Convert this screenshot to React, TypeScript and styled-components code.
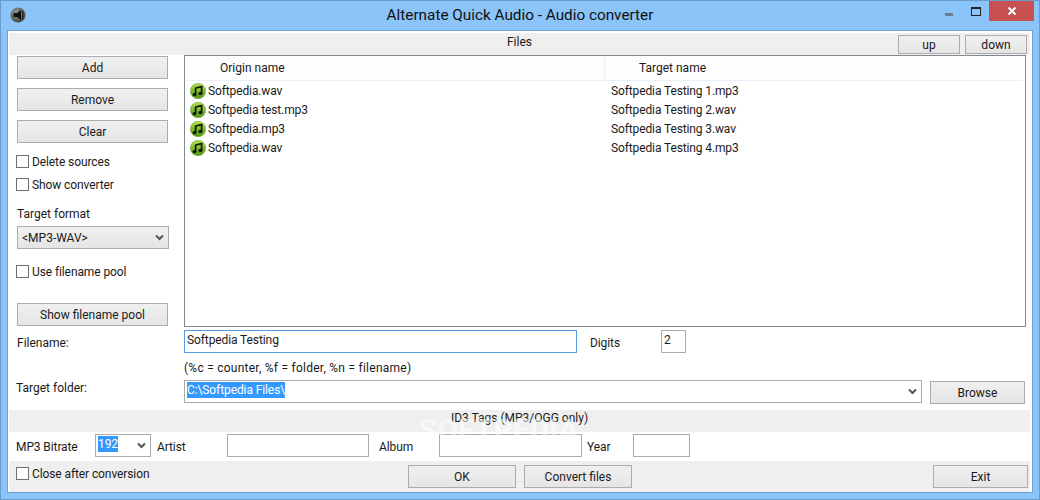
import React from "react";
import styled, { createGlobalStyle } from "styled-components";

const Global = createGlobalStyle`
  html, body { margin: 0; padding: 0; width: 1040px; height: 500px; overflow: hidden; }
  * { box-sizing: border-box; }
  body { font-family: Roboto, "Open Sans", sans-serif; font-size: 12px; color: #1a1a1a; }
`;

const Window = styled.div`
  width: 1040px; height: 500px; background: #8ac4f8; border: 1px solid #6a9ccb;
  display: flex; flex-direction: column;
`;
const TitleBar = styled.div`
  height: 29px; flex: none; display: grid; grid-template-columns: 1fr auto 1fr; align-items: start;
`;
const TitleIcon = styled.svg`width: 16px; height: 16px; margin: 6px 0 0 9px; display: block;`;
const TitleText = styled.div`font-size: 15.3px; line-height: 29px; color: #111;`;
const Controls = styled.div`display: flex; justify-content: flex-end; align-items: flex-start; margin-right: 5px;`;
const Minimize = styled.div`width: 8px; height: 3px; background: #6a7f94; margin: 12px 18px 0 0;`;
const Maximize = styled.div`width: 10px; height: 9px; border: 1px solid #222; border-top-width: 2px; margin: 6px 8px 0 0;`;
const CloseBtn = styled.div`
  width: 45px; height: 20px; background: #c75050; color: #fff; display: flex; align-items: center; justify-content: center;
`;

const Panel = styled.div`
  position: relative; width: 1026px; height: 463px; margin-left: 6px; flex: none;
  border: 1px solid #6da2d3; background: #fff; padding: 2px 2px 0 1px; display: flex; flex-direction: column;
`;
const Band = styled.div`
  height: 22px; background: #efefef; flex: none; display: grid; grid-template-columns: 1fr auto 1fr; align-items: center;
`;
const BandCaption = styled.div`line-height: 18px; margin-top: -4px;`;
const BandActions = styled.div`display: flex; justify-content: flex-end; gap: 5px; padding-right: 3px; margin-top: 1px;`;

const Btn = styled.button<{ $w?: number; $h?: number }>`
  width: ${p => (p.$w ? `${p.$w}px` : "100%")}; height: ${p => p.$h ?? 23}px; flex: none;
  background: linear-gradient(#f0f0f0, #e5e5e5); border: 1px solid #acacac; border-radius: 0;
  font: inherit; color: #1a1a1a; padding: 0; display: block;
`;

const Main = styled.div`display: flex; height: 272px; flex: none;`;
const Side = styled.div`width: 175px; flex: none; padding: 1px 6px 0 8px; display: flex; flex-direction: column;`;
const SideBtn = styled(Btn)<{ $mt?: number }>`margin-top: ${p => p.$mt ?? 0}px; width: 151px;`;
const CheckRow = styled.label<{ $mt?: number }>`
  display: flex; align-items: center; gap: 3px; height: 13px; margin-top: ${p => p.$mt ?? 0}px; margin-left: -1px;
  letter-spacing: -0.1px;
`;
const Check = styled.span`width: 13px; height: 13px; border: 1px solid #707070; background: #fff; flex: none;`;
const SideLabel = styled.div`line-height: 16px; margin-top: 15px;`;
const Combo = styled.div<{ $w?: number }>`
  height: 23px; width: ${p => (p.$w ? `${p.$w}px` : "100%")}; flex: none; margin-top: 4px;
  border: 1px solid #acacac; background: linear-gradient(#f0f0f0, #e5e5e5);
  display: flex; align-items: center; justify-content: space-between; padding: 0 3px 0 4px;
`;
const Chevron = styled.svg`width: 9px; height: 7px; flex: none; margin-right: 1px;`;

const List = styled.div`
  width: 842px; height: 272px; flex: none; border: 1px solid #828790; background: #fff; display: flex; flex-direction: column;
`;
const ListHead = styled.div`
  height: 25px; flex: none; display: grid; grid-template-columns: 419px 1fr; margin: 0 2px 0 1px;
  background: #fdfdfd; border-bottom: 1px solid #e8f0fb; align-items: center;
`;
const HeadCell = styled.div<{ $pl: number; $sep?: boolean }>`
  padding-left: ${p => p.$pl}px; height: 100%; line-height: 24px;
  border-right: ${p => (p.$sep ? "1px solid #e8f0fb" : "0")};
`;
const Row = styled.div`
  display: grid; grid-template-columns: 426px 1fr; height: 19px; align-items: center; letter-spacing: -0.12px;
`;
const NameCell = styled.div`display: flex; align-items: center; gap: 2px; padding-left: 5px;`;
const NoteIcon = styled.svg`width: 16px; height: 16px; flex: none; display: block;`;

const FormRow = styled.div<{ $h: number; $mt?: number }>`
  display: flex; height: ${p => p.$h}px; flex: none; align-items: flex-start; margin-top: ${p => p.$mt ?? 0}px;
`;
const LeadLabel = styled.div<{ $pl?: number; $mt?: number }>`
  width: 175px; flex: none; padding-left: ${p => p.$pl ?? 8}px; margin-top: ${p => p.$mt ?? 0}px; line-height: 16px;
`;
const Field = styled.div<{ $w: number; $focus?: boolean }>`
  width: ${p => p.$w}px; height: 23px; flex: none; letter-spacing: -0.1px;
  border: 1px solid ${p => (p.$focus ? "#569de5" : "#acacac")}; background: #fff;
  padding: 0 2px; line-height: 18px; display: flex; justify-content: space-between; align-items: flex-start;
`;
const Inline = styled.div<{ $ml: number; $mt?: number; $w?: number }>`
  margin-left: ${p => p.$ml}px; margin-top: ${p => p.$mt ?? 0}px; line-height: 16px; flex: none; letter-spacing: -0.1px;
  ${p => (p.$w ? `width: ${p.$w}px;` : "")}
`;
const Hint = styled.div`height: 25px; flex: none; padding: 5px 0 0 175px; line-height: 16px; letter-spacing: 0.25px;`;
const Selected = styled.span`background: #3399ff; color: #fff; line-height: 16px; margin-top: 1px;`;
const FieldChevron = styled(Chevron)`margin: 7px 2px 0 0;`;
const BrowseBtn = styled(Btn)`margin: 1px 0 0 8px;`;

const TagCaption = styled.div`
  height: 22px; flex: none; background: #efefef; text-align: center; line-height: 16px; color: #222;
`;
const TagRow = styled.div`height: 29px; flex: none; display: flex; align-items: flex-start; padding-top: 2px;`;
const Footer = styled.div`
  height: 31px; flex: none; background: #efefef; display: flex; align-items: flex-start; padding-top: 4px;
`;
const FooterCheck = styled(CheckRow)`margin: 2px 0 0 7px; width: 392px;`;
const FooterBtn = styled(Btn)<{ $ml?: number }>`margin-left: ${p => p.$ml ?? 0}px;`;
const Watermark = styled.div`
  position: absolute; left: 411px; top: 381px; font-size: 30px; font-weight: 700;
  color: #fff; opacity: 0.5; pointer-events: none; line-height: 36px;
`;

const Down = () => (
  <Chevron viewBox="0 0 9 7"><path d="M1 1.5 4.5 5 8 1.5" fill="none" stroke="#555" strokeWidth="2" /></Chevron>
);
const FieldDown = () => (
  <FieldChevron viewBox="0 0 9 7"><path d="M1 1.5 4.5 5 8 1.5" fill="none" stroke="#555" strokeWidth="2" /></FieldChevron>
);

const Note = ({ id }: { id: string }) => (
  <NoteIcon viewBox="0 0 16 16">
    <defs>
      <linearGradient id={id} x1="0" y1="0" x2="0" y2="1">
        <stop offset="0" stopColor="#b4e050" />
        <stop offset="1" stopColor="#4f9412" />
      </linearGradient>
    </defs>
    <circle cx="8" cy="8" r="7.7" fill={`url(#${id})`} stroke="#6b9a30" strokeWidth="0.5" />
    <path d="M5.6 5 11.6 3.6V10.4" fill="none" stroke="#0e1a08" strokeWidth="1.7" />
    <path d="M5.6 4.8V11.6" fill="none" stroke="#0e1a08" strokeWidth="1.7" />
    <ellipse cx="4.5" cy="11.6" rx="2" ry="1.7" fill="#0e1a08" />
    <ellipse cx="10.4" cy="10.5" rx="2" ry="1.7" fill="#0e1a08" />
  </NoteIcon>
);

const files = [
  ["Softpedia.wav", "Softpedia Testing 1.mp3"],
  ["Softpedia test.mp3", "Softpedia Testing 2.wav"],
  ["Softpedia.mp3", "Softpedia Testing 3.wav"],
  ["Softpedia.wav", "Softpedia Testing 4.mp3"],
];

export default function App() {
  return (
    <>
      <Global />
      <Window>
        <TitleBar>
          <TitleIcon viewBox="0 0 16 16">
            <defs>
              <radialGradient id="spk" cx="0.4" cy="0.35" r="0.75">
                <stop offset="0" stopColor="#9a9a9a" />
                <stop offset="1" stopColor="#3c3c3c" />
              </radialGradient>
            </defs>
            <circle cx="8" cy="8" r="7.6" fill="url(#spk)" />
            <path d="M3.5 6H7L11 3V13L7 10H3.5Z" fill="#111" />
            <rect x="12" y="4" width="1.4" height="8" fill="#222" />
          </TitleIcon>
          <TitleText>Alternate Quick Audio - Audio converter</TitleText>
          <Controls>
            <Minimize />
            <Maximize />
            <CloseBtn>
              <svg width="10" height="10" viewBox="0 0 10 10"><path d="M1.5 1.5 8.5 8.5M8.5 1.5 1.5 8.5" stroke="#fff" strokeWidth="2" /></svg>
            </CloseBtn>
          </Controls>
        </TitleBar>
        <Panel>
          <Band>
            <span />
            <BandCaption>Files</BandCaption>
            <BandActions>
              <Btn $w={62} $h={19}>up</Btn>
              <Btn $w={62} $h={19}>down</Btn>
            </BandActions>
          </Band>
          <Main>
            <Side>
              <SideBtn>Add</SideBtn>
              <SideBtn $mt={9}>Remove</SideBtn>
              <SideBtn $mt={9}>Clear</SideBtn>
              <CheckRow $mt={12}><Check />Delete sources</CheckRow>
              <CheckRow $mt={10}><Check />Show converter</CheckRow>
              <SideLabel>Target format</SideLabel>
              <Combo $w={152}>&lt;MP3-WAV&gt;<Down /></Combo>
              <CheckRow $mt={16}><Check />Use filename pool</CheckRow>
              <SideBtn $mt={25}>Show filename pool</SideBtn>
            </Side>
            <List>
              <ListHead>
                <HeadCell $pl={34} $sep>Origin name</HeadCell>
                <HeadCell $pl={34}>Target name</HeadCell>
              </ListHead>
              <div>
                {files.map(([a, b], i) => (
                  <Row key={i}>
                    <NameCell><Note id={`n${i}`} />{a}</NameCell>
                    <div>{b}</div>
                  </Row>
                ))}
              </div>
            </List>
          </Main>
          <FormRow $h={25} $mt={3}>
            <LeadLabel $mt={5}>Filename:</LeadLabel>
            <Field $w={393} $focus>Softpedia Testing</Field>
            <Inline $ml={13} $mt={5} $w={71}>Digits</Inline>
            <Field $w={25}>2</Field>
          </FormRow>
          <Hint>(%c = counter, %f = folder, %n = filename)</Hint>
          <FormRow $h={30}>
            <LeadLabel $pl={7}>Target folder:</LeadLabel>
            <Field $w={738}>
              <Selected>C:\Softpedia Files\</Selected>
              <FieldDown />
            </Field>
            <BrowseBtn $w={95}>Browse</BrowseBtn>
          </FormRow>
          <TagCaption>ID3 Tags (MP3/OGG only)</TagCaption>
          <TagRow>
            <Inline $ml={7} $mt={5} $w={79}>MP3 Bitrate</Inline>
            <Field $w={56}>
              <Selected>192</Selected>
              <FieldDown />
            </Field>
            <Inline $ml={6} $mt={5} $w={70}>Artist</Inline>
            <Field $w={142} />
            <Inline $ml={10} $mt={5} $w={60}>Album</Inline>
            <Field $w={143} />
            <Inline $ml={5} $mt={5} $w={46}>Year</Inline>
            <Field $w={57} />
          </TagRow>
          <Footer>
            <FooterCheck><Check />Close after conversion</FooterCheck>
            <FooterBtn $w={108}>OK</FooterBtn>
            <FooterBtn $w={108} $ml={8}>Convert files</FooterBtn>
            <FooterBtn $w={95} $ml={301}>Exit</FooterBtn>
          </Footer>
          <Watermark>SOFTPEDIA</Watermark>
        </Panel>
      </Window>
    </>
  );
}
